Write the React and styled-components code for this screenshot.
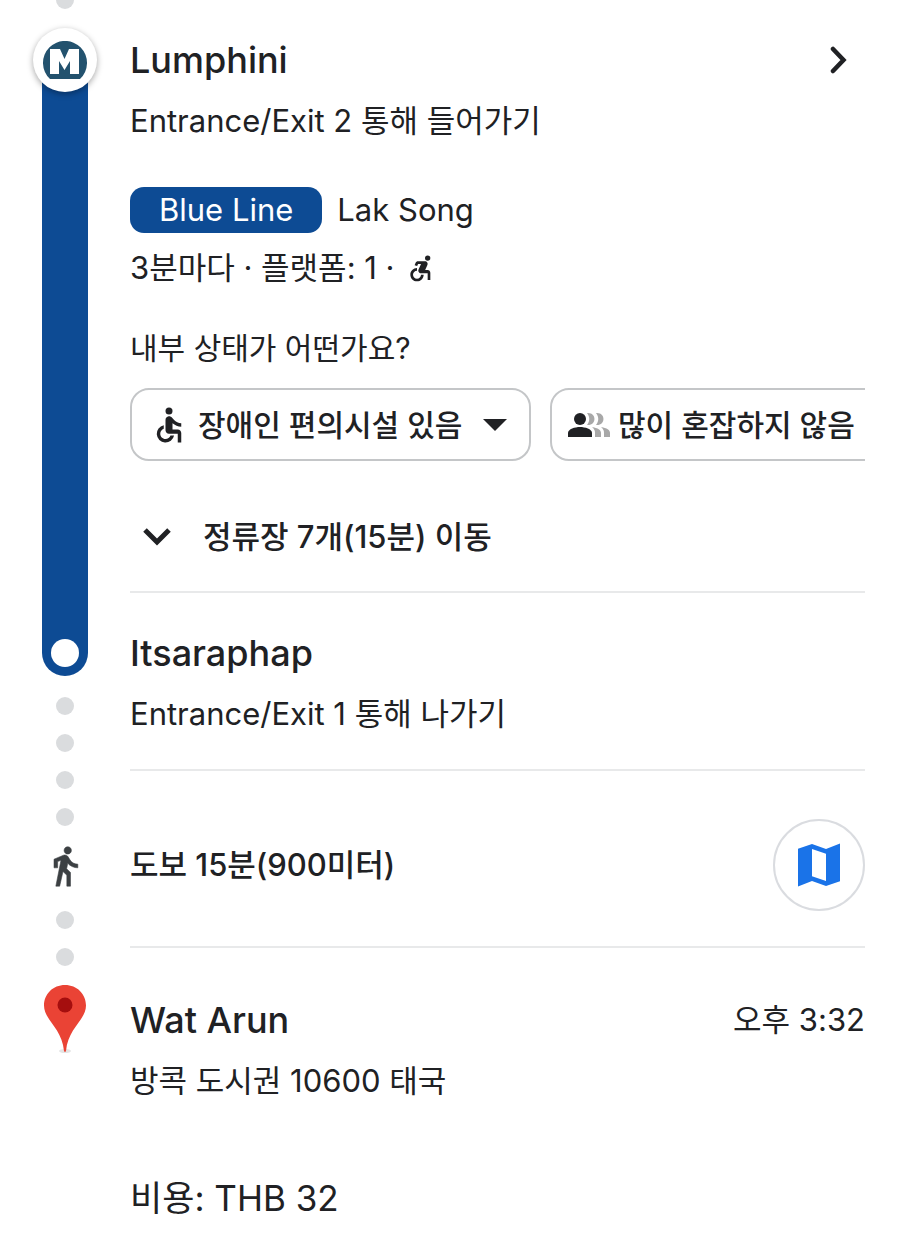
import React from 'react';
import styled, { createGlobalStyle } from 'styled-components';
import { MdAccessible, MdAccessibleForward } from 'react-icons/md';

const GlobalStyle = createGlobalStyle`
  * {
    box-sizing: border-box;
  }
  body {
    margin: 0;
    background: #fff;
    color: #202124;
    font-family: Inter, "Noto Sans CJK KR", sans-serif;
  }
  button, select {
    font: inherit;
    color: inherit;
    background: none;
    border: 0;
    padding: 0;
    cursor: pointer;
  }
  svg {
    display: block;
    flex-shrink: 0;
  }
`;

const Page = styled.main`
  padding-right: 35px;
`;
const Leg = styled.section`
  display: grid;
  grid-template-columns: 130px minmax(0, 1fr);
`;
const Rail = styled.div`
  display: flex;
  flex-direction: column;
  align-items: center;
`;
const Body = styled.div`
  display: flex;
  flex-direction: column;
  align-items: stretch;
  padding: ${p => p.$pad || '0'};
  border-bottom: ${p => (p.$last ? '0' : '2px solid #e8e9ea')};
`;

const Dot = styled.span`
  width: 18px;
  height: 18px;
  border-radius: 50%;
  background: #dadcde;
  margin-top: ${p => p.$gap || 0}px;
`;
const HalfDot = styled.span`
  width: 18px;
  height: 9px;
  border-radius: 0 0 9px 9px;
  background: #dadcde;
`;
const StationBadge = styled.div`
  position: relative;
  z-index: 1;
  display: flex;
  align-items: center;
  justify-content: center;
  width: 64px;
  height: 64px;
  margin-top: 19px;
  border-radius: 50%;
  background: #fff;
  box-shadow: 0 2px 6px rgba(0, 0, 0, 0.35);
`;
const Line = styled.div`
  flex: 1;
  width: 46px;
  margin-top: -32px;
  background: #0d4b94;
`;
const LineEnd = styled.div`
  display: flex;
  align-items: flex-end;
  justify-content: center;
  width: 46px;
  height: 83px;
  padding-bottom: 9px;
  border-radius: 0 0 23px 23px;
  background: #0d4b94;
`;
const Stop = styled.span`
  width: 28px;
  height: 28px;
  border-radius: 50%;
  background: #fff;
`;
const RailIcon = styled.div`
  margin-top: ${p => p.$gap}px;
`;

const Row = styled.div`
  display: flex;
  align-items: center;
  justify-content: ${p => (p.$spread ? 'space-between' : 'flex-start')};
  gap: ${p => p.$gap || 0}px;
  margin-top: ${p => p.$top || 0}px;
`;
const Name = styled.h2`
  margin: 0;
  font-size: 36px;
  line-height: 48px;
  font-weight: 500;
`;
const Text = styled.p`
  margin: ${p => p.$top || 0}px 0 0;
  font-size: 31px;
  line-height: 44px;
  font-weight: ${p => (p.$strong ? 500 : 400)};
`;
const Question = styled(Text)`
  font-size: 30px;
`;
const LineTag = styled.span`
  padding: 0 29px;
  border-radius: 14px;
  background: #0d4b94;
  color: #fff;
  font-size: 31px;
  line-height: 46px;
`;
const Direction = styled.span`
  font-size: 31px;
  line-height: 46px;
`;
const IconButton = styled.button`
  display: flex;
  padding: 8px 17px;
`;

const Chips = styled.div`
  display: flex;
  gap: 19px;
  margin-top: 18px;
  overflow: hidden;
`;
const Chip = styled.label`
  display: flex;
  flex-shrink: 0;
  align-items: center;
  gap: 8px;
  height: 73px;
  padding: 0 22px 0 16px;
  border: 2px solid #c4c6c8;
  border-radius: 19px;
  font-size: 30px;
  font-weight: 500;
`;
const Select = styled.select`
  appearance: none;
  height: 44px;
  outline: none;
`;
const Caret = styled.span`
  width: 0;
  margin-left: 12px;
  border: 12px solid transparent;
  border-top-color: #202124;
  border-bottom: 0;
`;

const Expander = styled.button`
  display: flex;
  align-items: center;
  gap: 32px;
  margin-top: 54px;
  padding-left: 13px;
  font-size: 31px;
  line-height: 44px;
  font-weight: 500;
`;
const MapButton = styled.button`
  display: flex;
  align-items: center;
  justify-content: center;
  width: 92px;
  height: 92px;
  border: 2px solid #dadce0;
  border-radius: 50%;
`;
const Fare = styled.p`
  margin: 71px 0 0;
  font-size: 35px;
  line-height: 48px;
`;

const MetroLogo = () => (
  <svg width="44" height="38" viewBox="0 0 44 38" aria-hidden="true">
    <path d="M7 38A22 22 0 1 1 37 38Z" fill="#23526e" />
    <path d="M7 8H17L21.5 18L26 8H36V33H27V20L21.5 29L16 20V33H7Z" fill="#fff" />
  </svg>
);

const ChevronRight = () => (
  <svg width="18" height="28" viewBox="0 0 18 28" aria-hidden="true">
    <path d="M3 3L13.500 14L3 25" fill="none" stroke="#202124" strokeWidth="4.500" strokeLinecap="round" />
  </svg>
);

const ChevronDown = () => (
  <svg width="28" height="18" viewBox="0 0 28 18" aria-hidden="true">
    <path d="M2 2L14 14L26 2" fill="none" stroke="#202124" strokeWidth="5" />
  </svg>
);

const PeopleIcon = () => (
  <svg width="42" height="26" viewBox="0 0 42 26" aria-hidden="true">
    <circle cx="12" cy="7" r="6" fill="#202124" />
    <path d="M0 25V21C0 17 7 15 12 15S24 17 24 21V25Z" fill="#202124" />
    <g fill="#a8a8a8">
      <path d="M19 1C29 0 29 14 19 13C22 9 22 5 19 1Z" />
      <path d="M28 1C38 0 38 14 28 13C31 9 31 5 28 1Z" />
      <path d="M24 15C30 16 33 18 33 21V25H27V21C27 18 26 17 24 15Z" />
      <path d="M33 15C39 16 42 18 42 21V25H36V21C36 18 35 17 33 15Z" />
    </g>
  </svg>
);

const WalkIcon = () => (
  <svg width="44" height="44" viewBox="0 0 24 24" fill="#3c4043" stroke="#3c4043" strokeWidth="0.3" aria-hidden="true">
    <path d="M13.5 5.5c1.1 0 2-.9 2-2s-.9-2-2-2-2 .9-2 2 .9 2 2 2zM9.8 8.9L7 23h2.1l1.8-8 2.1 2v6h2v-7.5l-2.1-2 .6-3C14.8 12 16.8 13 19 13v-2c-1.9 0-3.5-1-4.3-2.4l-1-1.6c-.4-.6-1-1-1.7-1-.3 0-.5.1-.8.1L6 8.3V13h2V9.6l1.8-.7" />
  </svg>
);

const MapIcon = () => (
  <svg width="56" height="56" viewBox="0 0 24 24" fill="#1a73e8" aria-hidden="true">
    <path d="M15 5.1L9 3 3 5.02v16.2l6-2.33 6 2.1 6-2.02V2.77L15 5.1zm0 13.79l-6-2.11V5.11l6 2.11v11.67z" />
  </svg>
);

const PinIcon = () => (
  <svg width="44" height="70" viewBox="0 0 44 70" aria-hidden="true">
    <ellipse cx="22" cy="67" rx="6" ry="2" fill="#e4e4e4" />
    <path d="M22 1C10 1 1 10 1 21.5C1 36 19 44 21 67Q22 69 23 67C25 44 43 36 43 21.5C43 10 34 1 22 1Z" fill="#ea4335" />
    <circle cx="22" cy="21" r="7.5" fill="#a50e0e" />
  </svg>
);

const App = () => (
  <>
    <GlobalStyle />
    <Page>
      <Leg>
        <Rail>
          <HalfDot />
          <StationBadge><MetroLogo /></StationBadge>
          <Line />
        </Rail>
        <Body $pad="36px 0 32px">
          <Row $spread>
            <Name>Lumphini</Name>
            <IconButton aria-label="Lumphini"><ChevronRight /></IconButton>
          </Row>
          <Text $top={15}>Entrance/Exit 2 통해 들어가기</Text>
          <Row $gap={15} $top={44}>
            <LineTag>Blue Line</LineTag>
            <Direction>Lak Song</Direction>
          </Row>
          <Row $gap={10} $top={13}>
            <Text>3분마다 · 플랫폼: 1 ·</Text>
            <MdAccessibleForward size={32} />
          </Row>
          <Question $top={36}>내부 상태가 어떤가요?</Question>
          <Chips>
            <Chip>
              <MdAccessible size={42} />
              <Select aria-label="편의시설">
                <option>장애인 편의시설 있음</option>
              </Select>
              <Caret />
            </Chip>
            <Chip>
              <PeopleIcon />
              <Select aria-label="혼잡도">
                <option>많이 혼잡하지 않음</option>
              </Select>
              <Caret />
            </Chip>
          </Chips>
          <Expander aria-expanded="false">
            <ChevronDown />
            정류장 7개(15분) 이동
          </Expander>
        </Body>
      </Leg>

      <Leg>
        <Rail>
          <LineEnd><Stop /></LineEnd>
          <Dot $gap={21} />
          <Dot $gap={19} />
        </Rail>
        <Body $pad="36px 0 33px">
          <Name>Itsaraphap</Name>
          <Text $top={15}>Entrance/Exit 1 통해 나가기</Text>
        </Body>
      </Leg>

      <Leg>
        <Rail>
          <Dot />
          <Dot $gap={19} />
          <RailIcon $gap={18}><WalkIcon /></RailIcon>
          <Dot $gap={23} />
        </Rail>
        <Body $pad="48px 0 35px">
          <Row $spread>
            <Text $strong>도보 15분(900미터)</Text>
            <MapButton aria-label="지도"><MapIcon /></MapButton>
          </Row>
        </Body>
      </Leg>

      <Leg>
        <Rail>
          <Dot />
          <RailIcon $gap={18}><PinIcon /></RailIcon>
        </Rail>
        <Body $last $pad="48px 0 18px">
          <Row $spread>
            <Name>Wat Arun</Name>
            <Text>오후 3:32</Text>
          </Row>
          <Text $top={15}>방콕 도시권 10600 태국</Text>
          <Fare>비용: THB 32</Fare>
        </Body>
      </Leg>
    </Page>
  </>
);

export default App;
